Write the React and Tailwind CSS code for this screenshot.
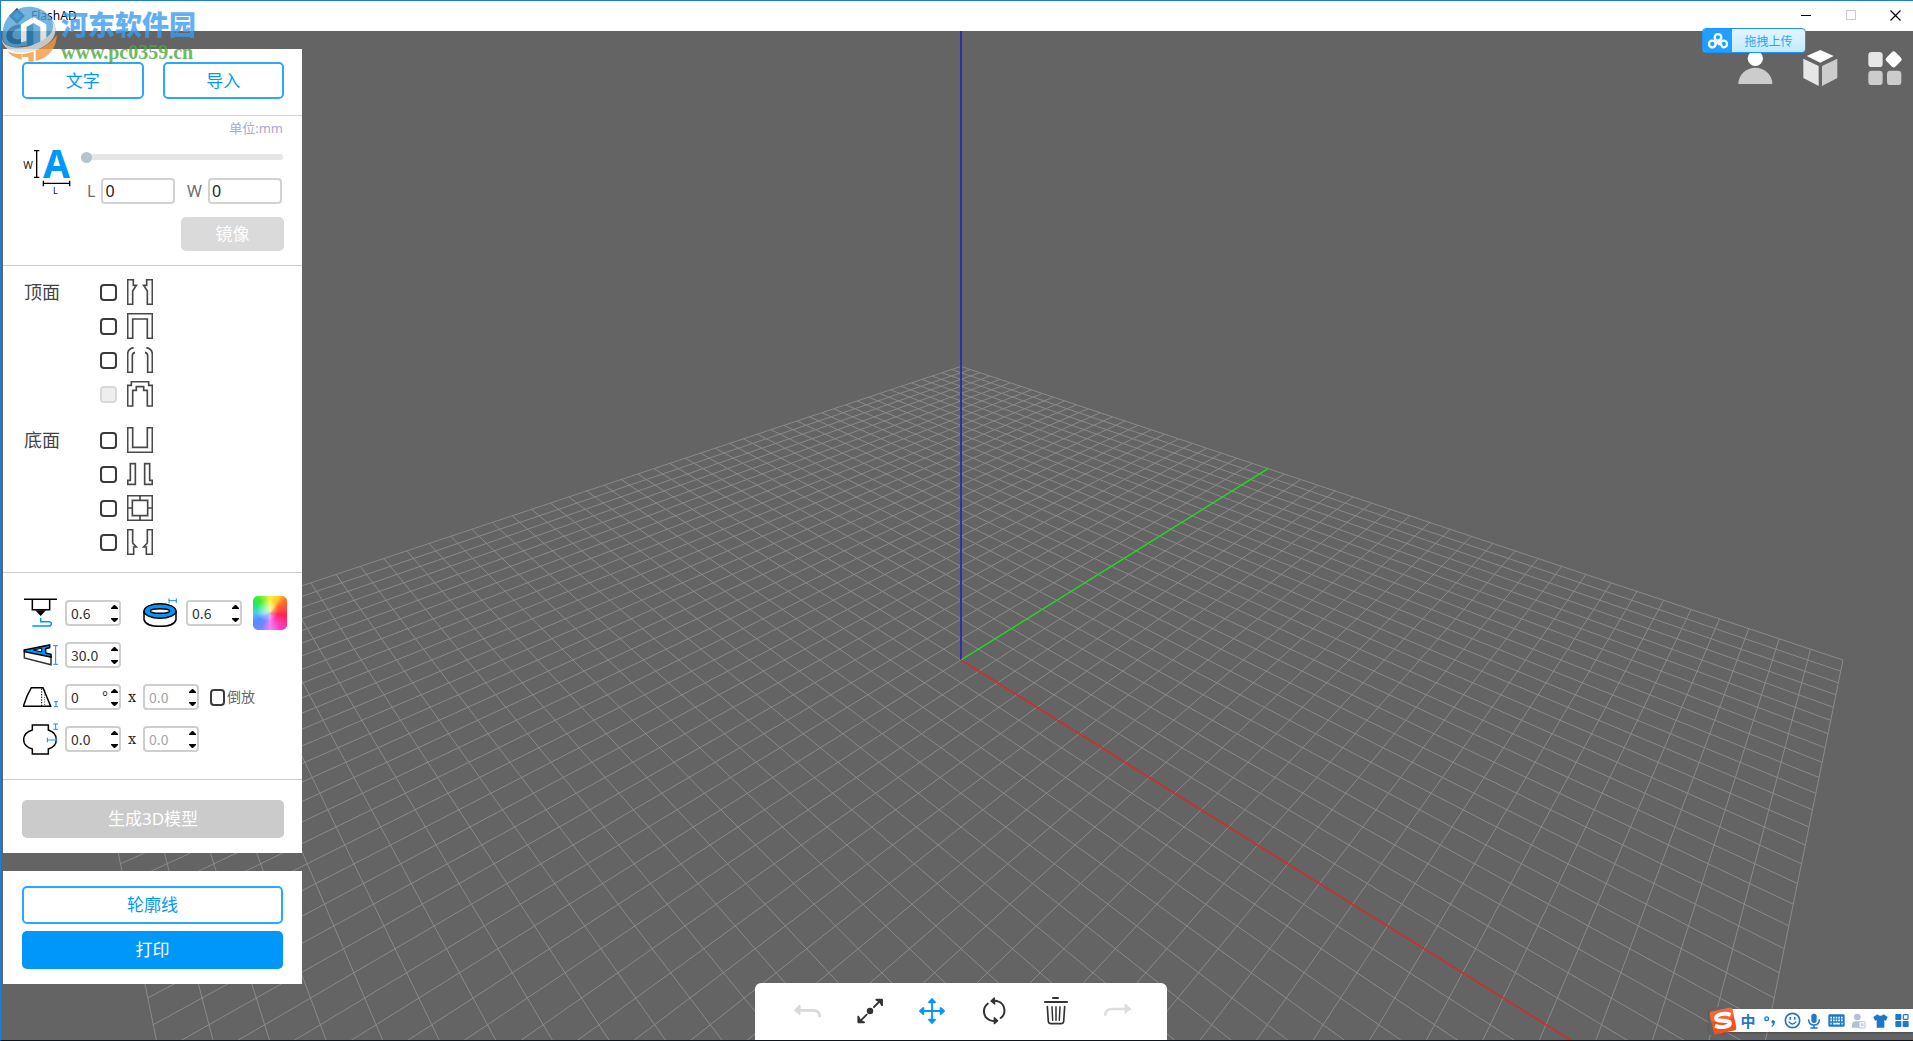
import { useState } from "react";

const CJK = "font-['Noto_Sans','Noto_Sans_CJK_SC',sans-serif]";

/* ---------- 3D scene ---------- */

// Perspective projection of the build plate; (px, py) run from -1 to 1 along each plate axis.
function project(px, py) {
  const u = (px + py) / 2;
  const v = (py - px) / 2;
  const w = 1 + 0.873 * v;
  return [961 + (882 * u) / w, 660 - (550 * v) / w];
}

function segment(a, b) {
  const [x1, y1] = project(a[0], a[1]);
  const [x2, y2] = project(b[0], b[1]);
  return `M${x1.toFixed(1)} ${y1.toFixed(1)}L${x2.toFixed(1)} ${y2.toFixed(1)}`;
}

const gridPath = Array.from({ length: 51 }, (_, i) => {
  const t = -1 + i / 25;
  return segment([t, -1], [t, 1]) + segment([-1, t], [1, t]);
}).join("");

function Scene() {
  return (
    <svg
      className="absolute inset-0 h-full w-full"
      viewBox="1 31 1912 1009"
      preserveAspectRatio="xMidYMid slice"
      fill="none"
      aria-hidden="true"
    >
      <path d={gridPath} stroke="#8a8a8a" strokeWidth="1" />
      <path d="M961 31V660" stroke="#3030a8" strokeWidth="2" />
      <path d={segment([0, 0], [0, 1])} stroke="#18e018" strokeWidth="1.3" />
      <path d={segment([0, 0], [1, 0])} stroke="#e81c1c" strokeWidth="1.3" />
    </svg>
  );
}

/* ---------- title bar ---------- */

function TitleBar() {
  return (
    <header className="flex h-[30px] shrink-0 items-center bg-white pl-2 text-black">
      <svg className="h-4 w-4" viewBox="0 0 16 16" aria-hidden="true">
        <path d="M8 0L16 8L8 16L0 8Z" fill="#20303c" />
        <path d="M4 8L8 4L12 8L8 12Z" fill="#2d8fd8" />
      </svg>
      <h1 className={`ml-[6px] text-xs leading-4 ${CJK}`}>FlashAD</h1>
      <div className="ml-auto flex h-7 self-start">
        <button aria-label="最小化" className="flex w-[46px] items-center justify-center">
          <svg className="h-[11px] w-[11px]" viewBox="0 0 11 11" shapeRendering="crispEdges">
            <path d="M0 5.5H10" stroke="#000" />
          </svg>
        </button>
        <button aria-label="最大化" disabled className="flex w-[44px] items-center justify-center">
          <svg className="h-[11px] w-[11px]" viewBox="0 0 11 11" fill="none" shapeRendering="crispEdges">
            <rect x=".5" y=".5" width="9" height="9" stroke="#ccc" />
          </svg>
        </button>
        <button aria-label="关闭" className="flex w-[40px] items-center justify-center pl-1">
          <svg className="h-[11px] w-[11px]" viewBox="0 0 11 11">
            <path d="M.5 .5L10.5 10.5M10.5 .5L.5 10.5" stroke="#000" strokeWidth="1.2" />
          </svg>
        </button>
      </div>
    </header>
  );
}

/* ---------- watermark ---------- */

function Watermark() {
  return (
    <div className="pointer-events-none absolute left-0 top-1 z-20 flex opacity-80">
      <svg className="h-[58px] w-[58px]" viewBox="0 0 174 174" aria-hidden="true">
        <path d="M5 100C0 40 40 5 84 5C124 5 156 32 164 72C164 92 140 106 104 118L40 126Q8 124 5 100Z" fill="#4fa3d8" />
        <path d="M60 58L97 36L136 58V112L118 120V66L97 54L76 66V108L60 112Z" fill="#fff" />
        <path d="M78 66L97 56V122L78 126Z" fill="#1f7cba" />
        <path d="M58 58C30 60 16 76 16 94C16 112 36 122 60 116V102C44 106 34 100 34 90C34 80 44 72 58 70Z" fill="#1a6da6" />
        <path d="M2 98C4 130 60 136 104 116C144 98 166 76 152 46C176 78 160 112 114 132C60 154 2 142 2 98Z" fill="#dcdfe2" />
        <path d="M18 138C34 146 48 148 62 146V164Q34 158 18 138ZM64 148L98 140V170H82V156H64ZM104 136C132 126 154 110 167 90C168 130 138 162 104 168Z" fill="#f59a3c" />
      </svg>
      <div className="ml-[2px]">
        <p className="h-[34px] whitespace-nowrap font-['Noto_Sans_CJK_SC',sans-serif] text-[27px] font-black leading-[38px] text-[#3c9df0]">
          河东软件园
        </p>
        <p className="whitespace-nowrap font-['Liberation_Serif',serif] text-xl font-bold leading-[26px] text-[#4aa83c]">
          www.pc0359.cn
        </p>
      </div>
    </div>
  );
}

/* ---------- panel pieces ---------- */

function OutlineButton({ children }) {
  return (
    <button className="h-[37px] w-full flex-1 rounded-[5px] border-2 border-[#2ba7fc] bg-white text-[17px] leading-6 text-[#0097fb]">
      {children}
    </button>
  );
}

function SizeIcon() {
  return (
    <svg className="h-[48px] w-[48px]" viewBox="68 448 144 144" aria-hidden="true">
      <g stroke="#000" strokeWidth="4" fill="none">
        <path d="M109 453V533M101 453H117M101 533H117" />
        <path d="M129 551H208M129 543V560M208 543V560" />
      </g>
      <text x="69" y="507" fontSize="31" fontFamily="Noto Sans" fill="#111">W</text>
      <text x="158" y="584" fontSize="27" fontFamily="Noto Sans" fill="#111">L</text>
      <text x="128" y="535" fontSize="117" fontWeight="700" fontFamily="Noto Sans" fill="#0097fb">A</text>
    </svg>
  );
}

function SizeField({ id, label }) {
  const [value, setValue] = useState("0");
  return (
    <div className="flex items-center">
      <label htmlFor={id} className="mr-[6px] text-base leading-6 text-[#6e6e6e]">{label}</label>
      <input
        id={id}
        value={value}
        onChange={(e) => setValue(e.target.value)}
        className="h-[26px] w-[74px] rounded-[4px] border-2 border-[#d2d2d2] px-[2px] text-base text-[#222]"
      />
    </div>
  );
}

const profiles = {
  top: [
    { name: "顶面 卡扣", d: "M2 2H19V19H28L17 36V76H2ZM76 2H59V19H50L61 36V76H76Z" },
    { name: "顶面 封闭", d: "M2 2H76V76H61V18H17V76H2Z" },
    { name: "顶面 圆角", d: "M20 2Q2 5 2 22V76H16V26Q16 18 24 16M58 2Q76 5 76 22V76H62V26Q62 18 54 16" },
    { name: "顶面 台阶", disabled: true, d: "M2 75V13H13V2H65V13H76V75H61V28H50V17H28V28H17V75Z" },
  ],
  bottom: [
    { name: "底面 封闭", d: "M2 2H17V61H61V2H76V76H2Z" },
    { name: "底面 外沿", d: "M10 8H25V70H2V58H10ZM68 8H53V70H76V58H68Z" },
    { name: "底面 框架", d: "M2 2H76V76H2ZM16 16H62V62H16ZM39 2V16M39 62V76M2 39H16M62 39H76" },
    { name: "底面 卡扣", d: "M2 2H17V42L28 54H20V76H2ZM76 2H61V42L50 54H58V76H76Z" },
  ],
};

const CHECK =
  "appearance-none rounded-[4px] border-2 border-[#3a3a3a] bg-white checked:bg-[#0097fb] disabled:border-[#d8d8d8] disabled:bg-[#eee]";

function ProfileGroup({ title, items }) {
  return (
    <fieldset className="flex">
      <legend className="float-left w-[76px] text-lg leading-[26px] text-[#444]">{title}</legend>
      <div className="flex flex-col gap-2">
        {items.map((p) => (
          <label key={p.name} className="flex h-[26px] items-center gap-[10px]">
            <input type="checkbox" aria-label={p.name} disabled={p.disabled} className={`h-[17px] w-[17px] ${CHECK}`} />
            <svg className="h-[26px] w-[26px]" viewBox="0 0 78 78" fill="none" stroke="#484848" strokeWidth="5">
              <path d={p.d} />
            </svg>
          </label>
        ))}
      </div>
    </fieldset>
  );
}

function Spinner({ label, initial, step = 0.1, digits = 1, suffix, disabled }) {
  const [value, setValue] = useState(initial);
  const bump = (dir) => setValue((v) => (Number(v) + dir * step).toFixed(digits));
  return (
    <div className="flex h-[26px] w-[56px] items-center rounded-[4px] border-2 border-[#cecece] bg-white pl-1">
      <input
        aria-label={label}
        inputMode="decimal"
        value={value}
        disabled={disabled}
        onChange={(e) => setValue(e.target.value)}
        className="min-w-0 flex-1 bg-transparent font-['Noto_Sans_CJK_SC',sans-serif] text-sm leading-5 text-[#333] disabled:text-[#a6a6a6]"
      />
      {suffix && <span className="mr-[3px] text-sm leading-5 text-[#333]">{suffix}</span>}
      <div className="flex w-2 shrink-0 flex-col gap-[5px]">
        <button aria-label={`${label} 增加`} disabled={disabled} onClick={() => bump(1)} className="flex h-2 items-center">
          <svg className="h-1 w-[7px]" viewBox="0 0 7 4"><path d="M0 4V3L3 0H4L7 3V4Z" /></svg>
        </button>
        <button aria-label={`${label} 减少`} disabled={disabled} onClick={() => bump(-1)} className="flex h-2 items-center">
          <svg className="h-1 w-[7px]" viewBox="0 0 7 4"><path d="M0 0V1L3 4H4L7 1V0Z" /></svg>
        </button>
      </div>
    </div>
  );
}

function ParamIcon({ viewBox, children }) {
  return (
    <svg className="h-[34px] w-[36px] shrink-0" viewBox={viewBox} fill="none" stroke="#000" strokeWidth="4.5" aria-hidden="true">
      {children}
    </svg>
  );
}

function Times() {
  return <span className="w-[22px] text-center font-['Noto_Serif','DejaVu_Serif',serif] text-sm leading-5 text-[#222]">x</span>;
}

function Parameters() {
  return (
    <section className="flex flex-col gap-4 border-b border-[#ccc] pb-[27px] pl-5 pr-[15px] pt-[27px]">
      <div className="flex h-[26px] items-center">
        <ParamIcon viewBox="69 83 108 102">
          <path d="M72 93H171M97 95V124H149V95" />
          <path d="M111 128H133L122 140Z" fill="#000" />
          <path d="M122 149V160H146Q154 160 154 166Q154 173 146 173H97" stroke="#0097fb" />
        </ParamIcon>
        <div className="ml-[6px]"><Spinner label="喷嘴直径" initial="0.6" /></div>
        <div className="ml-[22px] flex">
          <ParamIcon viewBox="429 84 108 102">
            <path d="M432 129V155Q438 175 480 175Q522 175 528 155V129" fill="#fff" />
            <ellipse cx="480" cy="129" rx="48" ry="22" fill="#0097fb" />
            <ellipse cx="480" cy="129" rx="29" ry="7" fill="#fff" />
            <path d="M507 98H529M507 91V105M529 91V105" stroke="#2288dd" strokeWidth="3" />
          </ParamIcon>
        </div>
        <div className="ml-[7px]"><Spinner label="壁厚" initial="0.6" /></div>
        <button
          aria-label="颜色"
          className="-my-1 ml-auto h-[34px] w-[34px] rounded-[5px] bg-[radial-gradient(circle_at_42%_42%,#ffffffc0_0%,#ffffff00_40%),conic-gradient(from_0deg_at_50%_50%,#fff23a_0deg,#ffc42c_30deg,#ff6d2a_50deg,#ff2355_100deg,#ff3fc0_145deg,#f283f5_180deg,#7a86ff_210deg,#4f8cff_240deg,#4fc8f0_270deg,#1ee86a_300deg,#38f02c_320deg,#fff23a_360deg)]"
        />
      </div>

      <div className="flex h-[26px] items-center">
        <ParamIcon viewBox="69 206 108 102">
          <path d="M73 243V266L153 286V262Z" fill="#fff" stroke="#333" />
          <path d="M73 242L149 227V235L137 238V251L153 255V263L73 247Z" fill="#0097fb" />
          <path d="M100 242L125 237V248Z" fill="#fff" strokeWidth="3" />
          <path d="M167 229V285M160 229H174M160 285H174" stroke="#2288dd" strokeWidth="3" />
        </ParamIcon>
        <div className="ml-[6px]"><Spinner label="高度" initial="30.0" /></div>
      </div>

      <div className="flex h-[26px] items-center">
        <ParamIcon viewBox="69 332 108 102">
          <path d="M94 355H129L152 411H70L82 378Z" />
          <path d="M125 358V410" strokeWidth="3" strokeDasharray="4 4" />
          <path d="M128 358L134 362V410" strokeWidth="2" strokeDasharray="3 4" />
          <path d="M168 397V412M162 397H174M162 412H174" stroke="#2288dd" strokeWidth="3" />
        </ParamIcon>
        <div className="ml-[6px]"><Spinner label="倾斜角度" initial="0" step={1} digits={0} suffix="°" /></div>
        <Times />
        <Spinner label="倾斜高度" initial="0.0" disabled />
        <label className="ml-[11px] flex items-center gap-[2px] text-sm leading-5 text-[#666]">
          <input type="checkbox" className={`h-[17px] w-[15px] ${CHECK}`} />
          倒放
        </label>
      </div>

      <div className="flex h-[26px] items-center">
        <ParamIcon viewBox="69 460 108 102">
          <path d="M97 469H145V484Q169 492 169 513Q169 533 145 541V556H97V541Q71 533 71 513Q71 492 97 484Z" />
          <path d="M142 514H170M142 507V521M170 507V521M167 466V482M160 466H174M160 482H174" stroke="#2288dd" strokeWidth="3" />
        </ParamIcon>
        <div className="ml-[6px]"><Spinner label="外扩" initial="0.0" /></div>
        <Times />
        <Spinner label="外扩高度" initial="0.0" disabled />
      </div>
    </section>
  );
}

function Sidebar() {
  const [scale, setScale] = useState(0);
  return (
    <aside className={`relative ml-[2px] mt-[18px] flex w-[299px] flex-col gap-[18px] self-start ${CJK}`}>
      <div className="bg-white">
        <section className="flex gap-[19px] border-b border-[#d4d4d4] pb-4 pl-[19px] pr-[18px] pt-[13px]">
          <OutlineButton>文字</OutlineButton>
          <OutlineButton>导入</OutlineButton>
        </section>

        <section className="border-b border-[#ccc] pb-[14px] pl-5 pr-[18px] pt-[2px]">
          <p className="pr-px text-right text-[13px] leading-5 text-[#a9a9cc]">单位:mm</p>
          <div className="mt-[11px] flex">
            <SizeIcon />
            <div className="ml-[10px] flex flex-1 flex-col pr-px">
              <input
                type="range"
                aria-label="缩放"
                value={scale}
                onChange={(e) => setScale(e.target.value)}
                className="mt-[5px] h-[6px] w-full appearance-none rounded-full bg-[#e6e6e6] [&::-webkit-slider-thumb]:h-[11px] [&::-webkit-slider-thumb]:w-[11px] [&::-webkit-slider-thumb]:appearance-none [&::-webkit-slider-thumb]:rounded-full [&::-webkit-slider-thumb]:bg-[#b7c4cc]"
              />
              <div className="mt-[18px] flex justify-between pl-[6px] pr-px">
                <SizeField id="size-l" label="L" />
                <SizeField id="size-w" label="W" />
              </div>
            </div>
          </div>
          <button disabled className="ml-auto mt-[13px] block h-[34px] w-[103px] rounded-[5px] bg-[#dadada] text-[17px] leading-6 text-white">
            镜像
          </button>
        </section>

        <section className="flex flex-col gap-5 border-b border-[#ccc] pb-[17px] pl-[21px] pt-[13px]">
          <ProfileGroup title="顶面" items={profiles.top} />
          <ProfileGroup title="底面" items={profiles.bottom} />
        </section>

        <Parameters />

        <section className="pb-[15px] pl-[19px] pr-[18px] pt-5">
          <button disabled className="block h-[38px] w-full rounded-[5px] bg-[#cbcbcb] text-[17px] leading-6 text-white">
            生成3D模型
          </button>
        </section>
      </div>

      <div className="flex flex-col gap-[7px] bg-white py-[15px] pl-[19px] pr-[19px]">
        <button className="h-[38px] w-full rounded-[5px] border-2 border-[#2ba7fc] text-[17px] leading-6 text-[#0097fb]">轮廓线</button>
        <button className="h-[38px] w-full rounded-[5px] bg-[#0097fb] text-[17px] leading-6 text-white">打印</button>
      </div>
    </aside>
  );
}

/* ---------- top-right tools ---------- */

function UploadBadge() {
  return (
    <button className="absolute -top-[3px] right-[107px] z-10 flex h-[25px] w-[104px] overflow-hidden rounded-[4px] border border-[#1e90ff] bg-linear-to-b from-[#e4f5fd] to-[#c2ebfc]">
      <span className="flex h-full w-[29px] items-center justify-center bg-[#1ea0ff]">
        <svg className="h-[16px] w-5" viewBox="0 0 60 48" fill="none" stroke="#fff" strokeWidth="7">
          <circle cx="30" cy="13" r="10" />
          <circle cx="13" cy="33" r="10" />
          <path d="M23 33L34 22C40 34 40 43 47 43A10 10 0 1 0 40 26L31 36" />
        </svg>
      </span>
      <span className="flex-1 text-center font-['Noto_Sans_CJK_SC',sans-serif] text-xs leading-[23px] text-[#28a8f4]">拖拽上传</span>
    </button>
  );
}

function SceneTools() {
  return (
    <div className="absolute right-[10px] top-[19px] flex items-center gap-[30px]">
      <button aria-label="用户">
        <svg className="h-[36px] w-[35px]" viewBox="0 0 105 108">
          <circle cx="52" cy="25" r="23" fill="#fff" />
          <path d="M1 102A51 49 0 0 1 103 102Z" fill="#ccc" />
        </svg>
      </button>
      <button aria-label="模型库">
        <svg className="h-[36px] w-[35px]" viewBox="0 0 105 108">
          <path d="M52 0L92 18L52 38L11 18Z" fill="#fff" />
          <path d="M1 26L47 48V108L1 84Z" fill="#e6e6e6" />
          <path d="M103 26L57 48V108L103 84Z" fill="#ccc" />
        </svg>
      </button>
      <button aria-label="更多">
        <svg className="h-[36px] w-[35px]" viewBox="0 0 105 108">
          <rect x="1" y="6" width="43" height="45" rx="10" fill="#e6e6e6" />
          <rect x="1" y="62" width="43" height="43" rx="10" fill="#ccc" />
          <rect x="57" y="62" width="43" height="43" rx="10" fill="#ccc" />
          <rect x="58" y="9" width="38" height="38" rx="7" fill="#fff" transform="rotate(45 77 28)" />
        </svg>
      </button>
    </div>
  );
}

/* ---------- bottom toolbar ---------- */

const dark = "#333333";
const tools = [
  {
    name: "撤销",
    disabled: true,
    art: (
      <g stroke="#d9d9d9" fill="none" strokeWidth="8" strokeLinecap="round" strokeLinejoin="round">
        <path d="M8 43H60Q79 43 80 60" />
        <path d="M20 29L7 42L20 55Z" fill="#d9d9d9" strokeWidth="5" />
      </g>
    ),
  },
  {
    name: "缩放",
    art: (
      <g stroke={dark} fill={dark} strokeWidth="5.5" strokeLinecap="round" strokeLinejoin="round">
        <circle cx="45" cy="45" r="7" />
        <path d="M57 33L78 12M35 56L14 77" />
        <path d="M64 11H81V28L75 17ZM10 62V79H27L16 74Z" />
      </g>
    ),
  },
  {
    name: "移动",
    art: (
      <g stroke="#0097fb" fill="#0097fb" strokeWidth="5.5" strokeLinecap="round" strokeLinejoin="round">
        <path d="M45 12V78M12 45H78" />
        <path d="M45 9L54 19H36ZM45 81L54 71H36ZM9 45L19 36V54ZM81 45L71 36V54Z" />
      </g>
    ),
  },
  {
    name: "旋转",
    art: (
      <g stroke={dark} fill="none" strokeWidth="6" strokeLinecap="round" strokeLinejoin="round">
        <path d="M26 23C10 36 10 64 34 73Q40 75 46 75" />
        <path d="M65 66C82 54 80 24 57 16Q50 13 42 15" />
        <path d="M46 6L36 15L47 24ZM46 65L56 74L46 83Z" fill={dark} strokeWidth="4" />
      </g>
    ),
  },
  {
    name: "删除",
    art: (
      <g stroke={dark} fill="none" strokeWidth="6" strokeLinecap="round" strokeLinejoin="round">
        <path d="M36 6H51" />
        <path d="M12 18H78" />
        <path d="M19 32L22 76Q23 83 30 83H60Q67 83 68 76L71 32" strokeWidth="5" />
        <path d="M33 32L35 73M45 32V73M57 32L55 73" strokeWidth="4.5" />
      </g>
    ),
  },
  {
    name: "重做",
    disabled: true,
    art: (
      <g stroke="#dedede" fill="none" strokeWidth="8" strokeLinecap="round" strokeLinejoin="round">
        <path d="M80 39H27Q8 39 7 56" />
        <path d="M67 25L80 38L67 51Z" fill="#dedede" strokeWidth="5" />
      </g>
    ),
  },
];

function Toolbar() {
  return (
    <div className="pointer-events-none absolute inset-x-0 bottom-0 flex justify-center pl-2">
      <nav aria-label="编辑工具" className="pointer-events-auto flex h-[57px] rounded-t-md bg-white pb-[2px] pl-[22px] pr-[18px]">
        {tools.map((t) => (
          <button key={t.name} aria-label={t.name} disabled={t.disabled} className="flex w-[62px] items-center justify-center">
            <svg className="h-[30px] w-[30px]" viewBox="0 0 90 90">{t.art}</svg>
          </button>
        ))}
      </nav>
    </div>
  );
}

/* ---------- input-method bar ---------- */

function ImeBar() {
  const blue = "#1f77cc";
  return (
    <div className="absolute bottom-[8px] right-0 flex h-[23px] items-center bg-white shadow-[0_1px_2px_#0004]">
      <svg className="-my-1 h-[28px] w-[28px] shrink-0" viewBox="0 0 84 84" aria-hidden="true">
        <path d="M0 0H40V84H0Z" fill="#646464" />
        <g transform="rotate(-12 42 42)">
          <rect x="7" y="7" width="70" height="70" rx="8" fill="#f4511e" />
          <rect x="7" y="7" width="70" height="32" rx="8" fill="#f9744a" opacity=".6" />
        </g>
        <path
          d="M66 25C50 17 22 20 22 33C22 45 62 38 62 50C62 62 34 62 17 55"
          transform="rotate(-4 42 42)"
          fill="none"
          stroke="#fff"
          strokeWidth="12"
        />
      </svg>
      <div className="flex items-center text-[#1f77cc]">
        <button aria-label="中文" className="w-[22px] text-center font-['Noto_Sans_CJK_SC',sans-serif] text-[15px] font-bold leading-[22px]">中</button>
        <button aria-label="标点" className="flex w-[22px] justify-center">
          <svg className="h-[16px] w-[16px]" viewBox="0 0 48 48">
            <circle cx="14" cy="17" r="5.500" fill="none" stroke={blue} strokeWidth="4" />
            <path d="M28 26a5.500 5.500 0 1 1 11 2Q38 38 30 42L28 39Q33 36 33 32Q28 31 28 26Z" fill={blue} />
          </svg>
        </button>
        <button aria-label="表情" className="flex w-[22px] justify-center">
          <svg className="h-[17px] w-[17px]" viewBox="0 0 51 51" fill="none" stroke={blue} strokeWidth="5">
            <circle cx="25.500" cy="25.500" r="21.500" />
            <path d="M14 29Q25 43 37 29" strokeWidth="4" />
            <path d="M19 15V23M32 15V23" />
          </svg>
        </button>
        <button aria-label="语音" className="flex w-[22px] justify-center">
          <svg className="h-[16px] w-[14px]" viewBox="0 0 42 48" fill="none" stroke={blue} strokeWidth="4.500">
            <rect x="13" y="2" width="16" height="28" rx="8" fill={blue} stroke="none" />
            <path d="M5 19V22Q7 36 21 36Q35 36 37 22V19M21 36V44M10 45H32" />
          </svg>
        </button>
        <button aria-label="键盘" className="flex w-[22px] justify-center">
          <svg className="h-[13px] w-[17px]" viewBox="0 0 51 39">
            <rect x="1" y="1" width="49" height="37" rx="4" fill={blue} />
            <path d="M7 11H44M7 19H44" stroke="#fff" strokeWidth="5" strokeDasharray="5 3" />
            <path d="M7 29H11M15 29H36M40 29H44" stroke="#fff" strokeWidth="5" />
          </svg>
        </button>
        <button aria-label="用户" className="flex w-[22px] justify-center">
          <svg className="h-[16px] w-[15px]" viewBox="0 0 45 48">
            <circle cx="19" cy="12" r="10" fill="#b4bed6" />
            <path d="M2 44Q2 25 12 25H26Q36 25 36 44Z" fill="#b4bed6" />
            <rect x="24" y="26" width="18" height="19" rx="2" fill="#fff" stroke="#b4bed6" strokeWidth="3" />
            <path d="M31 31V38H36V31" fill="none" stroke="#b4bed6" strokeWidth="3" />
          </svg>
        </button>
        <button aria-label="皮肤" className="flex w-[22px] justify-center">
          <svg className="h-[14px] w-[15px]" viewBox="0 0 45 42">
            <path d="M13 1Q22 10 32 1L44 9L39 20L34 18V41H11V18L6 20L1 9Z" fill={blue} />
          </svg>
        </button>
        <button aria-label="工具箱" className="flex w-[22px] justify-center">
          <svg className="h-[13px] w-[14px]" viewBox="0 0 42 39" fill={blue}>
            <rect x="1" y="0" width="18" height="18" rx="2" />
            <rect x="1" y="21" width="18" height="18" rx="2" />
            <rect x="23" y="21" width="18" height="18" rx="2" />
            <rect x="25" y="2" width="14" height="14" rx="2" fill="none" stroke={blue} strokeWidth="3.500" />
          </svg>
        </button>
      </div>
    </div>
  );
}

export default function App() {
  return (
    <div className="relative flex min-h-screen flex-col overflow-hidden border-b border-l border-t border-b-[#0b1624] border-l-[#1b7fd6] border-t-[#1b7fd6] bg-[#646464]">
      <TitleBar />
      <Watermark />
      <main className="relative flex flex-1">
        <Scene />
        <Sidebar />
        <UploadBadge />
        <SceneTools />
        <Toolbar />
        <ImeBar />
      </main>
    </div>
  );
}
